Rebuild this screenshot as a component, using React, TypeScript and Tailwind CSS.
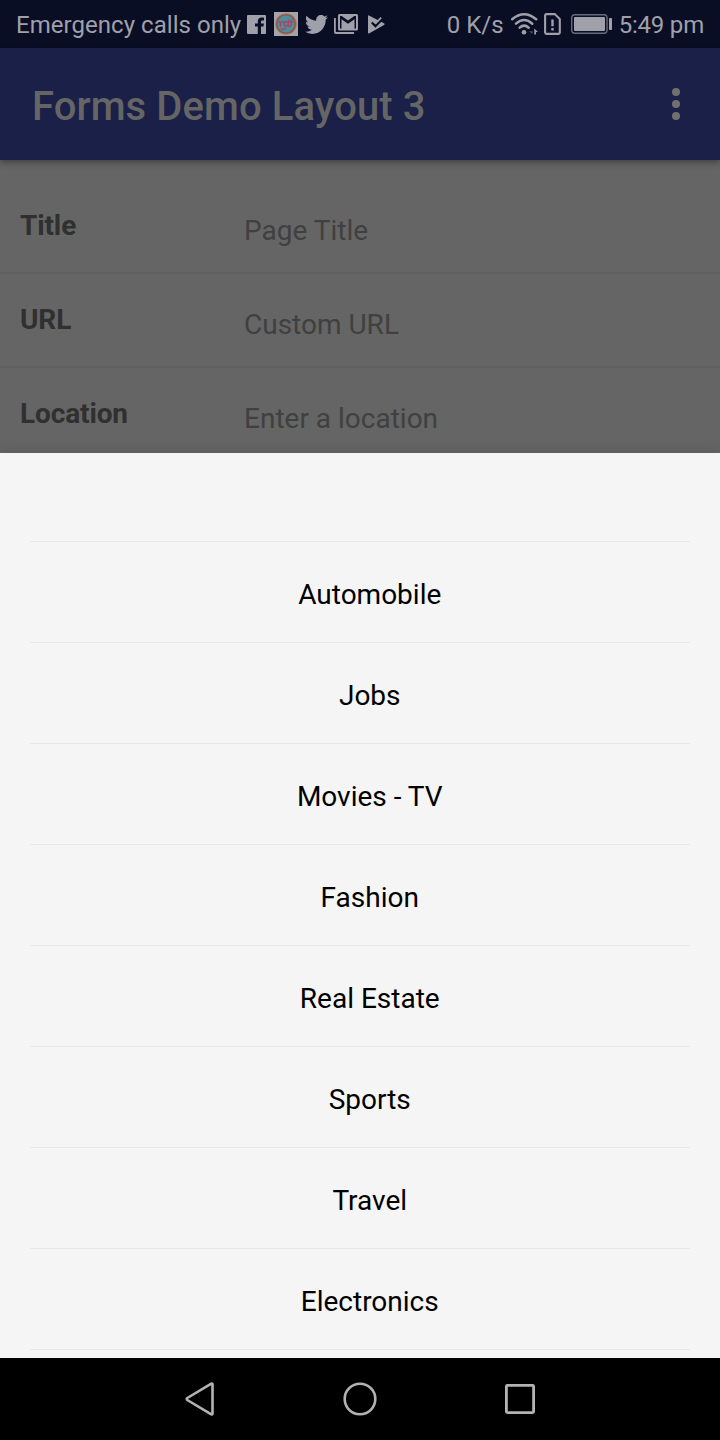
const categories = [
  'Automobile',
  'Jobs',
  'Movies - TV',
  'Fashion',
  'Real Estate',
  'Sports',
  'Travel',
  'Electronics',
];

const fields = [
  { label: 'Title', placeholder: 'Page Title' },
  { label: 'URL', placeholder: 'Custom URL' },
  { label: 'Location', placeholder: 'Enter a location' },
];

function FacebookIcon() {
  return (
    <svg className="ml-[6px] h-[19px] w-[19px] shrink-0" viewBox="0 0 19 19" fill="#a0a0aa">
      <path d="M1 0h17a1 1 0 0 1 1 1v17a1 1 0 0 1-1 1h-4v-7.500h2.500l.4-3H14V7c0-1 .3-1.500 1.500-1.500H17V2.700c-.3 0-1.200-.1-2.200-.1-2.500 0-4 1.400-4 3.900v2H8v3h2.800V19H1a1 1 0 0 1-1-1V1a1 1 0 0 1 1-1z" />
    </svg>
  );
}

function BadgeIcon() {
  return (
    <svg className="ml-2 h-6 w-6 shrink-0" viewBox="0 0 24 24" fill="none">
      <path fill="#a4a5aa" d="M0 0h24v24H0z" />
      <circle cx="12" cy="12" r="11" fill="#a08a70" />
      <circle cx="12" cy="12" r="9.300" fill="#518e9c" stroke="#93554f" strokeWidth="1.600" />
      <path
        d="M5 10c1.200-1 2 .5 1.500 4.500m0-2.500c1-2.300 2-2.500 3-2M14 10c-2.500-1.200-4 .2-3.800 2.700.4 2.300 2.800 1.800 4-.7l.7-4.500-.8 5.500c0 2 1.400 2 2.300.5M17.600 7.500l-.8 6M15.500 10h3.500M7.500 17.500l4-1"
        stroke="#a14a68"
        strokeWidth="1.500"
        strokeLinecap="round"
      />
    </svg>
  );
}

function TwitterIcon() {
  return (
    <svg className="ml-[7px] h-[19px] w-[23px] shrink-0" viewBox="0 2.300 24 19.500" preserveAspectRatio="none" fill="#a0a0aa">
      <path d="M23.953 4.570a10 10 0 01-2.825.775 4.958 4.958 0 002.163-2.723c-.951.555-2.005.959-3.127 1.184a4.920 4.920 0 00-8.384 4.482C7.690 8.095 4.067 6.130 1.640 3.162a4.822 4.822 0 00-.666 2.475c0 1.710.870 3.213 2.188 4.096a4.904 4.904 0 01-2.228-.616v.060a4.923 4.923 0 003.946 4.827 4.996 4.996 0 01-2.212.085 4.936 4.936 0 004.604 3.417 9.867 9.867 0 01-6.102 2.105c-.390 0-.779-.023-1.170-.067a13.995 13.995 0 007.557 2.209c9.053 0 13.998-7.496 13.998-13.985 0-.210 0-.420-.015-.630A9.935 9.935 0 0024 4.590z" />
    </svg>
  );
}

function MailIcon() {
  return (
    <svg className="ml-[6px] h-5 w-6 shrink-0" viewBox="0 0 24 20" fill="none">
      <path d="M.9 4v14a1 1 0 0 0 1 1H20" stroke="#a0a0aa" strokeWidth="1.800" />
      <rect x="4" y="0" width="20" height="16.500" rx="1.600" fill="#a0a0aa" />
      <path d="M6 14.600V2h1.600L14 6.500 20.400 2H22v12.600h-1.500V5.300L14 9.800 7.500 5.300v9.300z" fill="#0a0e24" />
    </svg>
  );
}

function PlayCheckIcon() {
  return (
    <svg className="ml-[10px] h-[19px] w-[17px] shrink-0" viewBox="0 0 17 19" fill="none">
      <path d="M1 .4 16 8.200q1.200.9 0 1.800L1.400 18.300Q0 19 0 17.500V1Q0 0 1 .4z" fill="#a0a0aa" />
      <path d="M3.800 7.500 7.400 11.100 14.200 4.300" stroke="#0a0e24" strokeWidth="2.200" />
      <path d="m7.500 8.300 5.700-5.700" stroke="#a0a0aa" strokeWidth="1.700" />
    </svg>
  );
}

function WifiIcon() {
  return (
    <svg className="ml-[7px] h-[22px] w-[27px] shrink-0" viewBox="0 0 27 22" fill="none">
      <g stroke="#a0a0aa" strokeWidth="2.500" strokeLinecap="round">
        <path d="M1.200 6.300Q13 -3.700 25.200 6.300" />
        <path d="M5 10.700Q13 3.400 21.300 10.700" />
        <path d="M8.600 14.700Q13.100 10.600 17.700 14.700" />
      </g>
      <circle cx="13" cy="19.300" r="2.300" fill="#a0a0aa" />
      <path d="M21.500 15.500V21l-3.500-2.700h3.500z" fill="#50525f" />
      <path d="M23.300 21.500v-6l3.700 3.500h-2v2.500z" fill="#a0a0aa" />
    </svg>
  );
}

function SimAlertIcon() {
  return (
    <svg className="ml-[6px] h-[22px] w-[17px] shrink-0" viewBox="0 0 17 22" fill="none">
      <path d="M2.500 1.100h8.300l5 5v13.400a1.400 1.400 0 0 1-1.400 1.400H2.500a1.400 1.400 0 0 1-1.400-1.400v-17a1.400 1.400 0 0 1 1.400-1.400z" stroke="#a0a0aa" strokeWidth="2.100" />
      <path d="M7.300 6.500h2.400v6.800H7.300zM7.300 15h2.400v2.600H7.300z" fill="#a0a0aa" />
    </svg>
  );
}

function BatteryIcon() {
  return (
    <svg className="ml-[10px] h-5 w-[41px] shrink-0" viewBox="0 0 41 20" fill="none">
      <rect x=".7" y=".7" width="35.300" height="18.600" rx="3" stroke="#686b79" strokeWidth="1.400" />
      <rect x="3" y="3" width="31" height="14" rx="1" fill="#a0a0aa" />
      <rect x="38" y="4" width="3" height="12" rx=".8" fill="#a0a0aa" />
    </svg>
  );
}

export default function App() {
  return (
    <div className="flex h-[1440px] w-[720px] flex-col overflow-hidden bg-[#656565] font-['Roboto',sans-serif]">
      <header className="flex h-12 shrink-0 items-center bg-[#0a0e24] px-4 text-2xl text-[#a0a0aa]">
        <span className="w-[225px] whitespace-nowrap pt-0.5 tracking-[0.04px]">Emergency calls only</span>
        <FacebookIcon />
        <BadgeIcon />
        <TwitterIcon />
        <MailIcon />
        <PlayCheckIcon />
        <span className="ml-auto whitespace-nowrap pt-0.5">0 K/s</span>
        <WifiIcon />
        <SimAlertIcon />
        <BatteryIcon />
        <span className="ml-[7px] whitespace-nowrap pt-0.5 tracking-[-0.2px]">5:49 pm</span>
      </header>

      <div className="z-10 flex h-28 shrink-0 items-center justify-between bg-[#1a2047] pl-8 pr-10 shadow-[0_2px_7px_rgba(0,0,0,0.4)]">
        <h1 className="pt-[5px] text-[40px] font-medium leading-none tracking-[0.08px] text-[#656565]">Forms Demo Layout 3</h1>
        <svg className="h-8 w-2" viewBox="0 0 8 32" fill="#707070">
          <circle cx="4" cy="4" r="4" />
          <circle cx="4" cy="16" r="4" />
          <circle cx="4" cy="28" r="4" />
        </svg>
      </div>

      <main className="h-[293px] shrink-0 overflow-hidden pt-5 text-[28px] leading-8">
        {fields.map((f) => (
          <div key={f.label} className="flex h-[94px] border-b-2 border-[#606060] pl-5">
            <label className="w-56 pt-[30px] font-bold tracking-[-0.12px] text-[#303030]">{f.label}</label>
            <span className="pt-[35px] text-[#404040]">{f.placeholder}</span>
          </div>
        ))}
      </main>

      <section className="flex h-[905px] shrink-0 flex-col bg-[#f5f5f5] px-[30px] shadow-[0_-1px_12px_rgba(0,0,0,0.12)]">
        <div className="h-[89px] border-b border-[#e8e8e8]" />
        {categories.map((c) => (
          <button
            key={c}
            className="flex h-[101px] w-full items-center justify-center border-b border-[#e8e8e8] pl-[19.500px] pt-[5px] text-[28px] leading-8 text-black"
          >
            {c}
          </button>
        ))}
      </section>

      <nav className="flex h-[82px] shrink-0 items-center justify-center gap-[120px] bg-black">
        <svg className="h-10 w-10" viewBox="0 0 40 40" fill="none" stroke="#b3b3b3" strokeWidth="2.600" strokeLinejoin="round">
          <path d="M32.500 5.300v29.400q-.2 1-1.200.6L7.300 21q-1.200-1 0-2L31.300 4.700q1-.4 1.200.6z" />
        </svg>
        <svg className="h-10 w-10" viewBox="0 0 40 40" fill="none" stroke="#b3b3b3" strokeWidth="2.600">
          <circle cx="20" cy="20" r="15.300" />
        </svg>
        <svg className="h-10 w-10" viewBox="0 0 40 40" fill="none" stroke="#b3b3b3" strokeWidth="2.800">
          <rect x="6.400" y="6.400" width="27.200" height="27.200" rx="1" />
        </svg>
      </nav>
    </div>
  );
}
